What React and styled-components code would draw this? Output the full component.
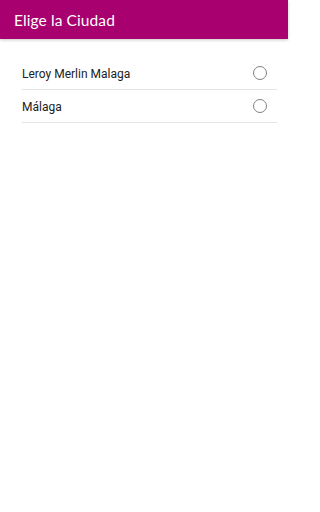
import React, { useState } from "react";
import styled, { createGlobalStyle } from "styled-components";

const GlobalStyle = createGlobalStyle`
  html, body {
    margin: 0;
    padding: 0;
    background: #ffffff;
  }
  body {
    font-family: Roboto, "Noto Sans", Arial, sans-serif;
  }
`;

const cities = [
  { id: 1, name: "Leroy Merlin Malaga" },
  { id: 2, name: "Málaga" },
];

const App = () => {
  const [selected, setSelected] = useState(null);

  return (
    <Page>
      <GlobalStyle />
      <Header>
        <Title>Elige la Ciudad</Title>
      </Header>

      <List>
        {cities.map((city) => (
          <Row key={city.id} onClick={() => setSelected(city.id)}>
            <Label>{city.name}</Label>
            <Radio checked={selected === city.id} />
          </Row>
        ))}
      </List>
    </Page>
  );
};

export default App;

const Page = styled.div`
  width: 288px;
  min-height: 512px;
  background: #ffffff;
`;

const Header = styled.header`
  height: 39px;
  background: #a8006f;
  display: flex;
  align-items: center;
  padding: 0 14px;
  box-shadow: 0 1px 3px rgba(0, 0, 0, 0.22);
  box-sizing: border-box;
`;

const Title = styled.h1`
  margin: 0;
  color: #ffffff;
  font-family: Lato, "Noto Sans", sans-serif;
  font-weight: 400;
  font-size: 15.5px;
  letter-spacing: 0.1px;
`;

const List = styled.div`
  padding: 18px 11px 0 22px;
`;

const Row = styled.div`
  height: 32px;
  display: flex;
  align-items: center;
  justify-content: space-between;
  border-bottom: 1px solid #e4e4e4;
  cursor: pointer;
`;

const Label = styled.span`
  font-size: 12px;
  color: #222222;
  padding-top: 1px;
`;

const Radio = styled.span`
  width: 12px;
  height: 12px;
  margin-right: 10px;
  border-radius: 50%;
  border: 1.2px solid ${(props) => (props.checked ? "#a8006f" : "#808080")};
  box-shadow: inset 0 0 0 3px
    ${(props) => (props.checked ? "#ffffff" : "transparent")};
  background: ${(props) => (props.checked ? "#a8006f" : "transparent")};
`;
